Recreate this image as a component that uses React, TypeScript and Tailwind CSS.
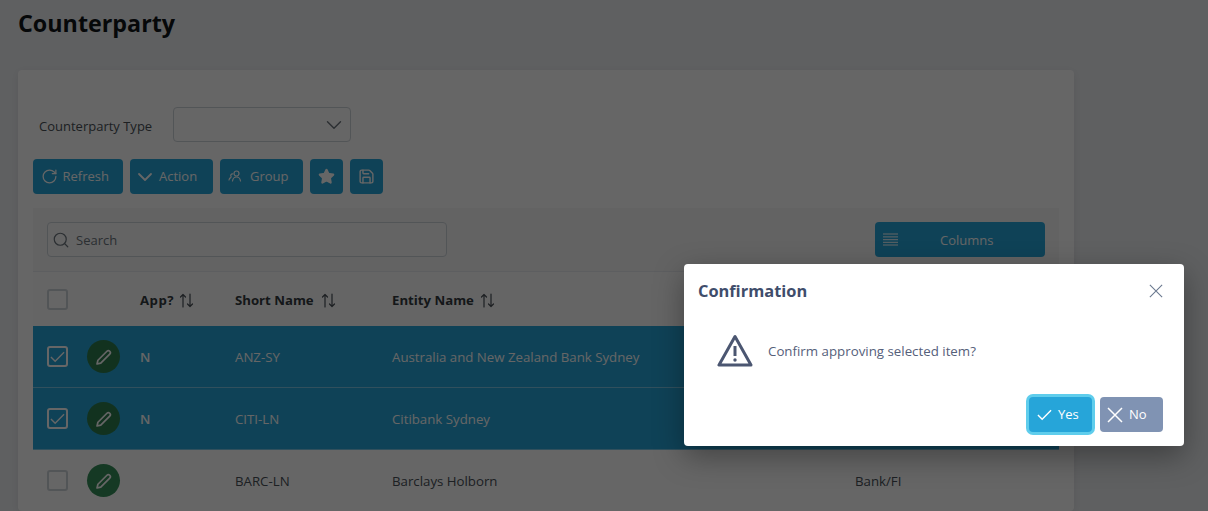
import { ChevronDown, RotateCw, Save, Search, Star } from "lucide-react";

const font = "font-['Open_Sans','Noto_Sans',sans-serif]";

const GroupIcon = () => (
  <svg width="16" height="14" viewBox="0 0 16 14" fill="none" stroke="currentColor" strokeWidth="1.2" strokeLinecap="round">
    <circle cx="8.5" cy="3.5" r="2.5" />
    <path d="M4.5 11c.4-2.6 2-4 4-4s3.600 1.400 4 4" />
    <path d="M4.600 3.800a1.800 1.800 0 0 0-1.400 3" />
    <path d="M1 10c.2-1.200.8-2 1.700-2.400" />
  </svg>
);

const ColumnsIcon = () => (
  <svg width="15" height="13" viewBox="0 0 15 13" stroke="currentColor" strokeWidth="1">
    <path d="M0 1h15M0 3.900h15M0 6.700h15M0 9.300h15M0 12h15" />
  </svg>
);

const SortIcon = () => (
  <svg width="15" height="15" viewBox="0 0 15 15" fill="none" stroke="currentColor" strokeWidth="1.200" strokeLinecap="round" strokeLinejoin="round">
    <path d="M4 14V1.500M1.500 4 4 1.500 6.500 4" />
    <path d="M11 1v12.500M8.500 11l2.500 2.500 2.500-2.500" />
  </svg>
);

const PencilIcon = () => (
  <svg width="18" height="18" viewBox="0 0 16 16" fill="none" stroke="currentColor" strokeWidth="1.500" strokeLinejoin="round">
    <path d="M1.800 14.200l.8-3.300 8-8a1.600 1.600 0 0 1 2.500 2.500l-8 8z" />
  </svg>
);

const WarningIcon = () => (
  <svg width="36" height="33" viewBox="0 0 36 33" fill="none" stroke="#4b5671" strokeWidth="3" strokeLinejoin="round">
    <path d="M18 2.500 2 31h32z" />
    <path d="M18 12v10" />
    <circle cx="18" cy="26" r="1.700" fill="#4b5671" stroke="none" />
  </svg>
);

const CheckMark = ({ size }: { size: number }) => (
  <svg width={size} height={size} viewBox="0 0 16 16" fill="none" stroke="currentColor" strokeWidth="1.500">
    <path d="M1 8.500 5.500 13 15 3.500" />
  </svg>
);

const CrossMark = ({ size, width }: { size: number; width: number }) => (
  <svg width={size} height={size} viewBox="0 0 16 16" fill="none" stroke="currentColor" strokeWidth={width}>
    <path d="M1 1l14 14M15 1 1 15" />
  </svg>
);

const ToolButton = ({ children, className }: { children: React.ReactNode; className: string }) => (
  <button className={`flex h-[35px] items-center rounded-[4px] bg-[#26a5d9] text-[13px] text-white ${className}`}>
    {children}
  </button>
);

const rows = [
  { app: "N", short: "ANZ-SY", entity: "Australia and New Zealand Bank Sydney", type: "", selected: true },
  { app: "N", short: "CITI-LN", entity: "Citibank Sydney", type: "", selected: true },
  { app: "", short: "BARC-LN", entity: "Barclays Holborn", type: "Bank/FI", selected: false },
];

export default function App() {
  return (
    <div className={`${font} relative h-[511px] w-[1208px] overflow-hidden bg-[#eef0f3] text-[#495057]`}>
      <div className="px-[18px]">
        <h1 className="h-[70px] pt-[5px] text-[23.300px] leading-[36px] font-bold text-[#111418]">Counterparty</h1>
        <div className="h-[441px] w-[1056px] rounded-[4px] bg-white px-[15px] pt-[37px] shadow-[0_2px_10px_rgba(0,0,0,0.08)]">
          <div className="flex items-center pl-[6px]">
            <span className="w-[134px] pt-[4px] text-[13px] text-[#495057]">Counterparty Type</span>
            <div className="flex h-[35px] w-[178px] items-center justify-end rounded-[4px] border border-[#ced4da] pr-[3px] text-[#6c757d]">
              <ChevronDown size={26} strokeWidth={1.3} />
            </div>
          </div>
          <div className="mt-[17px] flex gap-[7px]">
            <ToolButton className="w-[90px] gap-[4.500px] pl-[8px]">
              <RotateCw size={17} strokeWidth={1.800} />
              <span className="pt-[1px]">Refresh</span>
            </ToolButton>
            <ToolButton className="w-[83px] gap-[2px] pl-[3px]">
              <ChevronDown size={24} strokeWidth={1.800} />
              <span className="pt-[1px]">Action</span>
            </ToolButton>
            <ToolButton className="w-[83px] gap-[6px] pl-[8px]">
              <GroupIcon />
              <span className="pt-[1px]">Group</span>
            </ToolButton>
            <ToolButton className="w-[33px] justify-center">
              <Star size={17} fill="currentColor" />
            </ToolButton>
            <ToolButton className="w-[33px] justify-center">
              <Save size={17} strokeWidth={2} />
            </ToolButton>
          </div>
          <div className="mt-[14px] w-[1026px] bg-[#f8f8f8]">
            <div className="flex h-[64px] items-start justify-between border-b border-[#e9ecef] px-[14px] pt-[14px]">
              <div className="flex h-[35px] w-[400px] items-center gap-[6px] rounded-[4px] border border-[#ced4da] bg-[#fafafa] pl-[4px] text-[13px] text-[#6c757d]">
                <Search size={18} strokeWidth={1.600} />
                <span className="pt-[2px]">Search</span>
              </div>
              <button className="flex h-[35px] w-[170px] items-center rounded-[4px] bg-[#26a5d9] pl-[8px] text-[13px] text-white">
                <ColumnsIcon />
                <span className="ml-[42px] pt-[2px]">Columns</span>
              </button>
            </div>
            <div className="flex h-[54px] items-center bg-[#fdfdfd] pl-[14px] text-[13.200px] font-bold text-[#343a40]">
              <span className="h-[21px] w-[21px] rounded-[3px] border-2 border-[#ced4da] bg-white" />
              <span className="ml-[72px] flex w-[95px] items-center gap-[5px] pt-[3px]">
                <span className="tracking-[0.5px]">App?</span>
                <span className="text-[#495057]"><SortIcon /></span>
              </span>
              <span className="flex w-[157px] items-center gap-[7px] pt-[3px]">
                Short Name <span className="text-[#495057]"><SortIcon /></span>
              </span>
              <span className="flex items-center gap-[6px] pt-[3px]">
                Entity Name <span className="text-[#495057]"><SortIcon /></span>
              </span>
            </div>
          </div>
          <div className="w-[1026px]">
            {rows.map((row) => (
              <div
                key={row.short}
                className={`flex h-[62px] items-center border-b pl-[14px] text-[13.250px] ${
                  row.selected ? "border-white/40 bg-[#26a5d9] text-white" : "border-transparent bg-white text-[#495057]"
                }`}
              >
                <span
                  className={`flex h-[21px] w-[21px] items-center justify-center rounded-[3px] border-2 ${
                    row.selected ? "border-white text-white" : "border-[#ced4da]"
                  }`}
                >
                  {row.selected && <CheckMark size={15} />}
                </span>
                <span
                  className={`ml-[19px] flex h-[33px] w-[33px] items-center justify-center rounded-full text-white ${
                    row.selected ? "bg-[#2f7d4f]" : "bg-[#358f5a]"
                  }`}
                >
                  <PencilIcon />
                </span>
                <span className="ml-[20px] w-[95px] pt-[2px] font-semibold">{row.app}</span>
                <span className="w-[157px] pt-[2px]">{row.short}</span>
                <span className="w-[463px] pt-[2px]">{row.entity}</span>
                <span className="pt-[2px]">{row.type}</span>
              </div>
            ))}
          </div>
        </div>
      </div>

      <div className="absolute inset-0 bg-black/60" />

      <div className="absolute top-[264px] left-[684px] flex h-[182px] w-[500px] flex-col rounded-[4px] bg-white shadow-[0_10px_30px_rgba(0,0,0,0.35)]">
        <div className="flex items-center justify-between pt-[14px] pr-[21px] pl-[14px]">
          <span className="text-[16.400px] leading-[26px] font-bold text-[#3f4d6b]">Confirmation</span>
          <span className="text-[#6c7a90]">
            <CrossMark size={14} width={1.300} />
          </span>
        </div>
        <div className="mt-[30px] flex items-center pl-[33px]">
          <WarningIcon />
          <span className="ml-[15px] pt-[3px] text-[13.300px] text-[#55607a]">Confirm approving selected item?</span>
        </div>
        <div className="mt-auto flex justify-end gap-[8px] pr-[21px] pb-[14px]">
          <button className="flex h-[35px] w-[63px] items-center gap-[6px] rounded-[4px] bg-[#26a5d9] pl-[8px] text-[13px] text-white ring-[3px] ring-[#5fcdec]">
            <CheckMark size={15} />
            <span className="pt-[1px]">Yes</span>
          </button>
          <button className="flex h-[35px] w-[63px] items-center gap-[6px] rounded-[4px] bg-[#8093b3] pl-[7px] text-[13px] text-white">
            <CrossMark size={16} width={1.500} />
            <span className="pt-[1px]">No</span>
          </button>
        </div>
      </div>
    </div>
  );
}
